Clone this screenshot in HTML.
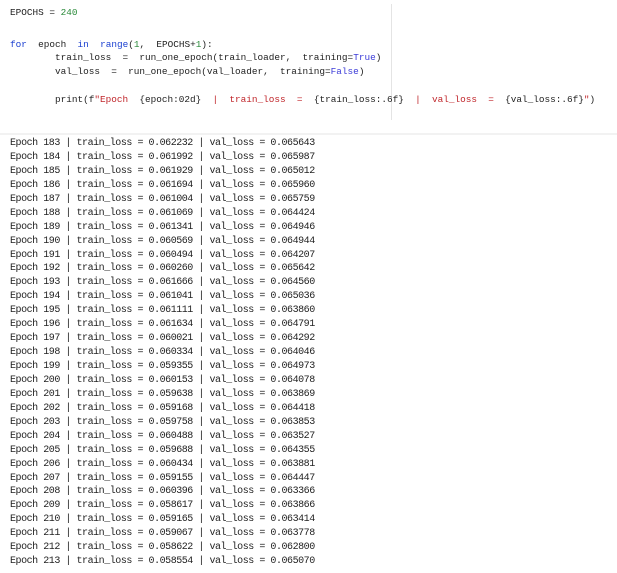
<html><head><style>
body{margin:0;width:617px;height:573px;background:#fff;position:relative;overflow:hidden;font-family:"Liberation Mono",monospace;font-size:9.4px;color:#222}
.l{position:absolute;white-space:pre;line-height:12px}
.k{color:#1a3fd0}.n{color:#2a8a3a}.s{color:#c0262b}.b{color:#3c3cd8}
#out{position:absolute;left:10px;top:137px;white-space:pre;line-height:13.93px;font-size:10px;letter-spacing:-0.46px;color:#222}
</style></head><body>
<div style="position:absolute;left:391px;top:4px;width:1px;height:116px;background:#e4e4e4"></div>
<div class="l" style="left:10px;top:7px">EPOCHS = <span class="n">240</span></div>
<div class="l" style="left:10px;top:39px"><span class="k">for</span>  epoch  <span class="k">in</span>  <span class="k">range</span>(<span class="n">1</span>,  EPOCHS+<span class="n">1</span>):</div>
<div class="l" style="left:55px;top:52px">train_loss  =  run_one_epoch(train_loader,  training=<span class="b">True</span>)</div>
<div class="l" style="left:55px;top:66px">val_loss  =  run_one_epoch(val_loader,  training=<span class="b">False</span>)</div>
<div class="l" style="left:55px;top:94px">print(f<span class="s">"Epoch  </span>{epoch:02d}<span class="s">  |  train_loss  =  </span>{train_loss:.6f}<span class="s">  |  val_loss  =  </span>{val_loss:.6f}<span class="s">"</span>)</div>
<div style="position:absolute;left:0;top:133px;width:617px;height:2px;background:#f2f2f2"></div>
<div id="out">Epoch 183 | train_loss = 0.062232 | val_loss = 0.065643
Epoch 184 | train_loss = 0.061992 | val_loss = 0.065987
Epoch 185 | train_loss = 0.061929 | val_loss = 0.065012
Epoch 186 | train_loss = 0.061694 | val_loss = 0.065960
Epoch 187 | train_loss = 0.061004 | val_loss = 0.065759
Epoch 188 | train_loss = 0.061069 | val_loss = 0.064424
Epoch 189 | train_loss = 0.061341 | val_loss = 0.064946
Epoch 190 | train_loss = 0.060569 | val_loss = 0.064944
Epoch 191 | train_loss = 0.060494 | val_loss = 0.064207
Epoch 192 | train_loss = 0.060260 | val_loss = 0.065642
Epoch 193 | train_loss = 0.061666 | val_loss = 0.064560
Epoch 194 | train_loss = 0.061041 | val_loss = 0.065036
Epoch 195 | train_loss = 0.061111 | val_loss = 0.063860
Epoch 196 | train_loss = 0.061634 | val_loss = 0.064791
Epoch 197 | train_loss = 0.060021 | val_loss = 0.064292
Epoch 198 | train_loss = 0.060334 | val_loss = 0.064046
Epoch 199 | train_loss = 0.059355 | val_loss = 0.064973
Epoch 200 | train_loss = 0.060153 | val_loss = 0.064078
Epoch 201 | train_loss = 0.059638 | val_loss = 0.063869
Epoch 202 | train_loss = 0.059168 | val_loss = 0.064418
Epoch 203 | train_loss = 0.059758 | val_loss = 0.063853
Epoch 204 | train_loss = 0.060488 | val_loss = 0.063527
Epoch 205 | train_loss = 0.059688 | val_loss = 0.064355
Epoch 206 | train_loss = 0.060434 | val_loss = 0.063881
Epoch 207 | train_loss = 0.059155 | val_loss = 0.064447
Epoch 208 | train_loss = 0.060396 | val_loss = 0.063366
Epoch 209 | train_loss = 0.058617 | val_loss = 0.063866
Epoch 210 | train_loss = 0.059165 | val_loss = 0.063414
Epoch 211 | train_loss = 0.059067 | val_loss = 0.063778
Epoch 212 | train_loss = 0.058622 | val_loss = 0.062800
Epoch 213 | train_loss = 0.058554 | val_loss = 0.065070</div>
</body></html>
